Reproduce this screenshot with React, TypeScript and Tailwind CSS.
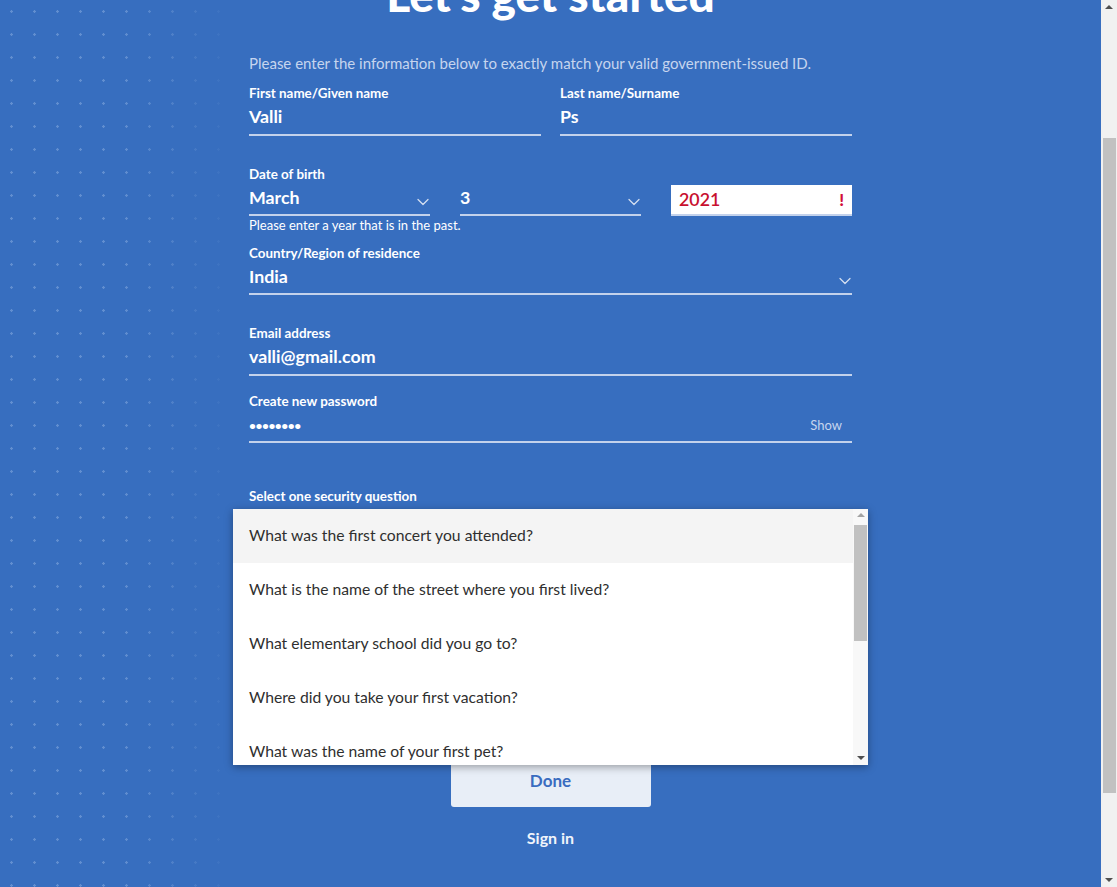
import { ChevronDown } from "lucide-react";

const questions = [
  "What was the first concert you attended?",
  "What is the name of the street where you first lived?",
  "What elementary school did you go to?",
  "Where did you take your first vacation?",
  "What was the name of your first pet?",
];

function Field({ label, value, className = "" }: { label: string; value: string; className?: string }) {
  return (
    <div className={`flex flex-col ${className}`}>
      <span className="text-[13.4px] leading-4 font-bold text-white">{label}</span>
      <div className="mt-1 pb-[7px] border-b-2 border-[#c3d2ec]">
        <span className="block text-[17.8px] leading-[22px] font-bold text-white">{value}</span>
      </div>
    </div>
  );
}

function SelectBox({ value, className = "" }: { value: string; className?: string }) {
  return (
    <div className={`flex items-end justify-between pb-[6px] border-b-2 border-[#c3d2ec] ${className}`}>
      <span className="text-[17.8px] leading-[22px] font-bold text-white">{value}</span>
      <ChevronDown size={20} strokeWidth={1.5} className="text-[#d4def0] -mb-[4px] -mr-[3px]" />
    </div>
  );
}

export default function App() {
  return (
    <div className="flex h-[887px] w-[1117px] overflow-hidden font-['Lato','Liberation_Sans',sans-serif]">
      <div className="relative flex-1 bg-[#376ebf] overflow-hidden">
        {/* dotted backdrop */}
        <div className="absolute inset-0 bg-[radial-gradient(circle,rgba(180,205,240,0.35)_1px,transparent_1.5px)] bg-[length:23px_23px] [mask-image:linear-gradient(to_right,black_0px,black_120px,transparent_240px)]" />

        <div className="relative mx-auto w-[603px] flex flex-col">
          <h1 className="-mt-[31px] h-[52px] text-center text-[46px] leading-[52px] font-black text-white">Let's get started</h1>

          <p className="mt-[32px] text-[15px] leading-5 text-[#c6d5ee]">
            Please enter the information below to exactly match your valid government-issued ID.
          </p>

          <div className="mt-[12px] flex gap-[19px]">
            <Field label="First name/Given name" value="Valli" className="w-[292px]" />
            <Field label="Last name/Surname" value="Ps" className="flex-1" />
          </div>

          <div className="mt-[30px] flex flex-col">
            <span className="text-[13.4px] leading-4 font-bold text-white">Date of birth</span>
            <div className="mt-[4px] flex gap-[30px]">
              <SelectBox value="March" className="w-[181px]" />
              <SelectBox value="3" className="w-[181px]" />
              <div className="flex-1 -mt-[1px] flex items-center justify-between bg-white px-2 h-[31px] border-b-2 border-[#c3d2ec]">
                <span className="text-[17.8px] font-semibold text-[#c8102e]">2021</span>
                <span className="text-[17px] font-black text-[#d10f3a]">!</span>
              </div>
            </div>
            <span className="mt-[2px] text-[13px] leading-[14px] text-white">Please enter a year that is in the past.</span>
          </div>

          <div className="mt-[13px] flex flex-col">
            <span className="text-[13.4px] leading-4 font-bold text-white">Country/Region of residence</span>
            <SelectBox value="India" className="mt-1" />
          </div>

          <Field label="Email address" value="valli@gmail.com" className="mt-[30px]" />

          <div className="mt-[17px] flex flex-col">
            <span className="text-[13.4px] leading-4 font-bold text-white">Create new password</span>
            <div className="mt-[6px] pb-[4px] flex items-center justify-between border-b-2 border-[#c3d2ec]">
              <span className="text-[12px] leading-[22px] font-bold tracking-[-0.5px] text-white">••••••••</span>
              <span className="mr-[10px] text-[13px] text-[#c6d5ee]">Show</span>
            </div>
          </div>

          <div className="relative mt-[45px] flex flex-col">
            <span className="text-[13.4px] leading-4 font-bold text-white">Select one security question</span>
            <div className="h-[251px]" />

            {/* open listbox */}
            <div className="absolute left-[-16px] top-[21px] z-10 flex h-[256px] w-[635px] bg-white shadow-[0_2px_8px_rgba(0,0,0,0.35)]">
              <ul className="flex-1 overflow-hidden">
                {questions.map((q, i) => (
                  <li
                    key={q}
                    className={`flex h-[54px] items-center pl-4 text-[15.7px] text-[#2f2f2f] ${i === 0 ? "bg-[#f4f4f4]" : "bg-white"}`}
                  >
                    {q}
                  </li>
                ))}
              </ul>
              <div className="flex w-[15px] flex-col items-center bg-[#f8f8f8]">
                <span className="mt-[4px] h-0 w-0 border-x-[4px] border-b-[4px] border-x-transparent border-b-[#a3a3a3]" />
                <div className="mt-[8px] h-[116px] w-[13px] bg-[#c1c1c1]" />
                <div className="flex-1" />
                <span className="mb-[5px] h-0 w-0 border-x-[4px] border-t-[4px] border-x-transparent border-t-[#505050]" />
              </div>
            </div>

            <button className="mx-auto h-[52px] w-[200px] rounded-[3px] bg-[#e8eef7] text-[17px] font-bold text-[#3a6cc0]">
              Done
            </button>
            <span className="mt-[19px] text-center text-[16px] font-bold text-[#f0f4fb]">Sign in</span>
          </div>
        </div>
      </div>

      {/* page scrollbar */}
      <div className="flex w-[16px] flex-col items-center bg-[#f1f1f1]">
        <span className="mt-[5px] h-0 w-0 border-x-[4px] border-b-[4px] border-x-transparent border-b-[#505050]" />
        <div className="mt-[129px] h-[655px] w-[13px] bg-[#c1c1c1]" />
        <div className="flex-1" />
        <span className="mb-[5px] h-0 w-0 border-x-[4px] border-t-[4px] border-x-transparent border-t-[#505050]" />
      </div>
    </div>
  );
}
